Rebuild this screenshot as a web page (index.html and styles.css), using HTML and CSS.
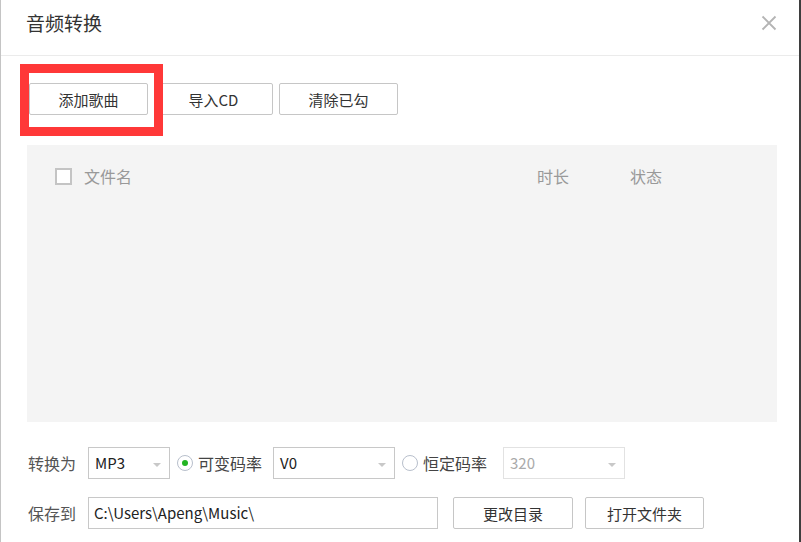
FILE: index.html
```html
<!DOCTYPE html>
<html lang="zh-CN">
<head>
    <meta charset="UTF-8">
    <title>音频转换</title>
    <link rel="stylesheet" href="styles.css">
</head>
<body>
    <div class="dialog">
        <div class="header">
            <h1>音频转换</h1>
            <span class="close">
                <svg width="16" height="16" viewBox="0 0 16 16">
                    <path d="M1.5 1.5 L14.5 14.5 M14.5 1.5 L1.5 14.5" stroke="#b4b4b4" stroke-width="1.8" fill="none"/>
                </svg>
            </span>
        </div>

        <div class="toolbar">
            <button class="btn">添加歌曲</button>
            <button class="btn">导入CD</button>
            <button class="btn">清除已勾</button>
            <div class="highlight"></div>
        </div>

        <div class="list">
            <div class="list-head">
                <span class="check"></span>
                <span class="col-name">文件名</span>
                <span class="col-time">时长</span>
                <span class="col-state">状态</span>
            </div>
        </div>

        <div class="form-row row-format">
            <span class="label">转换为</span>
            <div class="select sel-format">MP3<i class="arrow"></i></div>
            <span class="radio checked"></span>
            <span class="radio-text">可变码率</span>
            <div class="select sel-rate">V0<i class="arrow"></i></div>
            <span class="radio"></span>
            <span class="radio-text wide">恒定码率</span>
            <div class="select sel-rate disabled">320<i class="arrow"></i></div>
        </div>

        <div class="form-row row-save">
            <span class="label">保存到</span>
            <div class="path">C:\Users\Apeng\Music\</div>
            <button class="btn btn-change">更改目录</button>
            <button class="btn btn-open">打开文件夹</button>
        </div>
    </div>
</body>
</html>
```

FILE: styles.css
```css
* {
    margin: 0;
    padding: 0;
    box-sizing: border-box;
}

body {
    background: #fff;
    font-family: "Noto Sans CJK SC", "Open Sans", sans-serif;
    color: #333;
}

.dialog {
    position: relative;
    width: 801px;
    height: 542px;
    border-left: 1px solid #c4c4c4;
    border-right: 2px solid #3e3e3e;
    overflow: hidden;
}

/* Title bar */
.header {
    height: 56px;
    border-bottom: 1px solid #ebebeb;
    display: flex;
    align-items: center;
    justify-content: space-between;
    padding: 0 22px 10px 25px;
}

.header h1 {
    font-size: 19px;
    font-weight: normal;
    color: #333;
    line-height: 1;
}

.close {
    display: flex;
    width: 16px;
    height: 16px;
}

/* Buttons */
.toolbar {
    position: relative;
    display: flex;
    gap: 6px;
    padding: 27px 0 0 28px;
}

.btn {
    height: 32px;
    width: 119px;
    background: #fff;
    border: 1px solid #c6c6c6;
    border-radius: 2px;
    font-family: inherit;
    font-size: 15px;
    color: #333;
    line-height: 1;
}

.highlight {
    position: absolute;
    left: 19px;
    top: 8px;
    width: 143px;
    height: 72px;
    border: 9px solid #ff3838;
}

/* File list */
.list {
    margin: 30px 0 0 26px;
    width: 750px;
    height: 277px;
    background: #f4f4f4;
}

.list-head {
    display: flex;
    align-items: center;
    height: 62px;
    padding-left: 28px;
    font-size: 16px;
    color: #999;
}

.check {
    width: 17px;
    height: 17px;
    border: 2px solid #c4c4c4;
    background: #fff;
    margin-right: 12px;
}

.col-name {
    width: 453px;
}

.col-time {
    width: 93px;
}

/* Form rows */
.form-row {
    display: flex;
    align-items: center;
    padding-left: 27px;
    height: 32px;
}

.row-format {
    margin-top: 25px;
}

.row-save {
    margin-top: 18px;
}

.label {
    width: 60px;
    font-size: 16px;
    color: #555;
}

.select {
    position: relative;
    height: 32px;
    border: 1px solid #c8c8c8;
    font-size: 15px;
    line-height: 30px;
    padding-left: 6px;
    color: #222;
    background: #fff;
}

.sel-format {
    width: 82px;
}

.sel-rate {
    width: 122px;
}

.select.disabled {
    border-color: #e2e2e2;
    color: #aaa;
}

.arrow {
    position: absolute;
    right: 8px;
    top: 15px;
    width: 0;
    height: 0;
    border-left: 4px solid transparent;
    border-right: 4px solid transparent;
    border-top: 4px solid #c8c8c8;
}

.radio {
    position: relative;
    width: 16px;
    height: 16px;
    border: 1px solid #b8bfcc;
    border-radius: 50%;
    background: #fff;
    margin: 0 5px 0 7px;
}

.radio.checked:after {
    content: '';
    position: absolute;
    left: 4px;
    top: 4px;
    width: 6px;
    height: 6px;
    border-radius: 50%;
    background: #22b422;
}

.radio-text {
    font-size: 16px;
    color: #444;
    margin-right: 11px;
}

.radio-text.wide {
    margin-right: 16px;
}

.path {
    width: 350px;
    height: 32px;
    border: 1px solid #c8c8c8;
    font-size: 15px;
    line-height: 30px;
    padding-left: 5px;
    color: #222;
}

.btn-change {
    margin-left: 15px;
    width: 120px;
}

.btn-open {
    margin-left: 12px;
}
```
